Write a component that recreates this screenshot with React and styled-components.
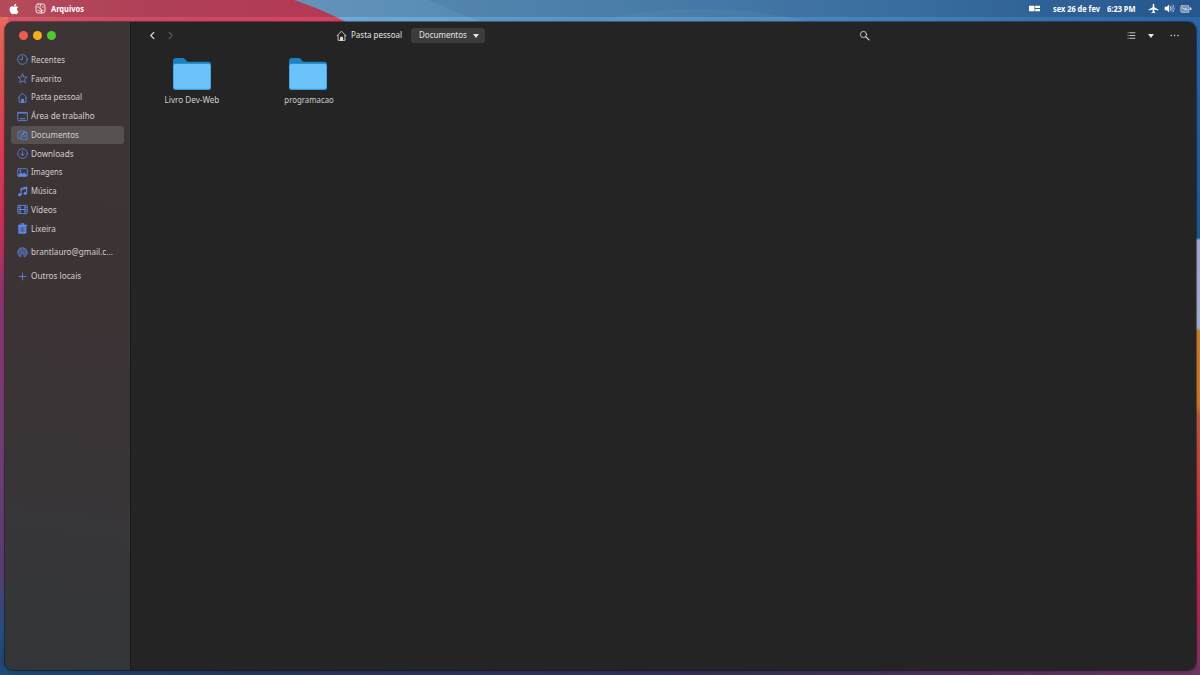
import React from "react";
import styled, { createGlobalStyle, css } from "styled-components";
import { FaApple } from "react-icons/fa";

const GlobalStyle = createGlobalStyle`
  * {
    box-sizing: border-box;
  }

  body {
    margin: 0;
    overflow: hidden;
    font-family: "Noto Sans", "Open Sans", sans-serif;
    font-size: 9.2px;
    line-height: 12px;
  }
`;

const Desktop = styled.div`
  position: relative;
  width: 1200px;
  height: 675px;
  overflow: hidden;
  display: flex;
  flex-direction: column;
`;

const WallpaperSvg = styled.svg`
  position: absolute;
  top: 0;
  left: 0;
  width: 1200px;
  height: 675px;
`;

const MenuBar = styled.header`
  position: relative;
  display: flex;
  align-items: center;
  height: 17px;
  padding: 0 8px;
  background: rgba(0, 0, 0, 0.15);
  color: #fff;
  flex-shrink: 0;
`;

const MenuLeft = styled.div`
  display: flex;
  align-items: center;
`;

const MenuRight = styled.div`
  display: flex;
  align-items: center;
  margin-left: auto;
`;

const Icon = styled.svg`
  display: block;
  flex-shrink: 0;
  width: ${(props) => props.$size || 11}px;
  height: ${(props) => props.$size || 11}px;
  margin-left: ${(props) => props.$left || 0}px;
  fill: none;
  stroke: currentColor;
  stroke-width: ${(props) => props.$stroke || 1.2};
  stroke-linecap: round;
  stroke-linejoin: round;
`;

/* condensed text, $width is the width it takes in the row */
const Label = styled.span`
  display: block;
  white-space: nowrap;
  width: ${(props) => (props.$width ? `${props.$width}px` : "auto")};
  margin-left: ${(props) => props.$left || 0}px;
  transform: scaleX(${(props) => props.$scale || 0.87});
  transform-origin: ${(props) => props.$origin || "left"};
  ${(props) =>
    props.$bold &&
    css`
      font-size: 8.6px;
      font-weight: 700;
    `}
`;

const Window = styled.main`
  position: relative;
  display: flex;
  width: 1191px;
  height: 648px;
  margin: 5px 0 0 5px;
  border-radius: 8px;
  overflow: hidden;
  background: #242424;
`;

const WindowShadow = styled.div`
  position: absolute;
  top: 22px;
  left: 5px;
  width: 1191px;
  height: 648px;
  border-radius: 8px;
  box-shadow: 0 0 0 1px rgba(0, 0, 0, 0.35), 0 1px 4px rgba(0, 0, 0, 0.3);
`;

const Sidebar = styled.nav`
  width: 126px;
  padding: 9px 6px 0;
  border-right: 1px solid #1a1a1a;
  background: linear-gradient(188deg, #3d3435 0%, #3c3335 45%, #393436 65%, #363638 80%, #333538 100%);
  color: #d2cfcf;
  flex-shrink: 0;
`;

const Lights = styled.div`
  display: flex;
  gap: 4.8px;
  height: 20px;
  padding: 0 0 0 8px;
`;

const Light = styled.i`
  width: 9px;
  height: 9px;
  border-radius: 50%;
  background: ${(props) => props.$color};
`;

const Place = styled.div`
  display: flex;
  align-items: center;
  height: 17.75px;
  margin-top: ${(props) => props.$top || 0}px;
  margin-bottom: 1px;
  padding-left: 6px;
  border-radius: 3px;
  background: ${(props) => (props.$active ? "#565051" : "transparent")};

  svg {
    margin-right: 3px;
    color: #5f8be2;
  }
`;

const Content = styled.section`
  flex: 1;
`;

const HeaderBar = styled.div`
  display: flex;
  align-items: center;
  height: 27px;
  padding-left: 15.5px;
  color: #e6e6e6;
`;

const Crumb = styled.div`
  display: flex;
  align-items: center;
  width: 67px;
  margin-left: 159.5px;

  span {
    margin-top: -1px;
  }
`;

const ActiveCrumb = styled.div`
  display: flex;
  align-items: center;
  width: 74px;
  height: 15px;
  margin-left: 8px;
  padding-left: 8px;
  border-radius: 3px;
  background: #3c3c3c;

  span {
    margin-top: -1px;
  }
`;

const Caret = styled.i`
  border: 3.5px solid transparent;
  border-top: 4px solid currentColor;
  border-bottom: 0;
  margin-left: ${(props) => props.$left || 0}px;
`;

const Files = styled.div`
  display: flex;
  padding: 8px 0 0 3px;
`;

const Folder = styled.figure`
  display: flex;
  flex-direction: column;
  align-items: center;
  width: 116.2px;
  margin: 0;
  color: #d0d0d0;

  svg {
    display: block;
    width: 40px;
    height: 34px;
  }

  figcaption {
    margin-top: 3px;
  }
`;

const Wallpaper = () => (
  <WallpaperSvg viewBox="0 0 1200 675">
    <defs>
      <linearGradient id="top" x1="290" x2="1200" y1="0" y2="0" gradientUnits="userSpaceOnUse">
        <stop offset="0" stopColor="#74aedb" />
        <stop offset="0.35" stopColor="#5f9dcf" />
        <stop offset="0.7" stopColor="#4684c0" />
        <stop offset="1" stopColor="#2d67a9" />
      </linearGradient>
      <linearGradient id="red" x1="0" x2="350" y1="0" y2="0" gradientUnits="userSpaceOnUse">
        <stop offset="0" stopColor="#d5596a" />
        <stop offset="0.4" stopColor="#cd4c67" />
        <stop offset="1" stopColor="#d54363" />
      </linearGradient>
      <linearGradient id="left" x1="0" x2="0" y1="17" y2="675" gradientUnits="userSpaceOnUse">
        <stop offset="0" stopColor="#e96a5f" />
        <stop offset="0.1" stopColor="#e05254" />
        <stop offset="0.2" stopColor="#df3c57" />
        <stop offset="0.32" stopColor="#c93158" />
        <stop offset="0.42" stopColor="#8d356f" />
        <stop offset="0.65" stopColor="#704173" />
        <stop offset="0.84" stopColor="#5a3d73" />
        <stop offset="0.93" stopColor="#295084" />
        <stop offset="1" stopColor="#1e426d" />
      </linearGradient>
      <linearGradient id="right" x1="0" x2="0" y1="0" y2="675" gradientUnits="userSpaceOnUse">
        <stop offset="0" stopColor="#2d68ab" />
        <stop offset="0.34" stopColor="#23598f" />
        <stop offset="0.352" stopColor="#22578c" />
        <stop offset="0.356" stopColor="#a2abd0" />
        <stop offset="0.486" stopColor="#a7b2d3" />
        <stop offset="0.49" stopColor="#c98233" />
        <stop offset="0.6" stopColor="#c87c35" />
        <stop offset="0.615" stopColor="#b85c40" />
        <stop offset="0.7" stopColor="#c04741" />
        <stop offset="0.8" stopColor="#bc3048" />
        <stop offset="0.9" stopColor="#a82a52" />
        <stop offset="1" stopColor="#713765" />
      </linearGradient>
      <linearGradient id="bottom" x1="0" x2="1200" y1="0" y2="0" gradientUnits="userSpaceOnUse">
        <stop offset="0" stopColor="#204b78" />
        <stop offset="0.2" stopColor="#27385f" />
        <stop offset="0.6" stopColor="#353158" />
        <stop offset="1" stopColor="#6c365f" />
      </linearGradient>
    </defs>
    <rect width="1200" height="675" fill="url(#top)" />
    <path d="M428 0C450 9 465 17 490 24H1200V0z" fill="#285d97" opacity="0.12" />
    <path d="M590 24C640 10 675 8 710 9c45 1 75 6 105 15z" fill="#8dbbe0" opacity="0.13" />
    <path d="M0 0H294C315 7 333 15 350 24H0z" fill="url(#red)" />
    <rect y="17" width="8" height="658" fill="url(#left)" />
    <rect x="1192" y="17" width="8" height="658" fill="url(#right)" />
    <rect y="666" width="1200" height="9" fill="url(#bottom)" />
  </WallpaperSvg>
);

const ICONS = {
  clock: (
    <>
      <circle cx="8" cy="8" r="7" />
      <path d="M8 4v4H4.5" />
    </>
  ),
  star: <path d="M8 1.2l1.8 4.6 5 .3-3.9 3.2 1.3 4.9L8 11.5l-4.2 2.7 1.3-4.9L1.2 6.1l5-.3z" />,
  home: (
    <>
      <path d="M1.5 8.500L8 1.700l6.500 6.800M3 8v7h10V8" />
      <path d="M6.500 15v-4.500h3V15z" fill="currentColor" />
    </>
  ),
  desktop: (
    <>
      <rect x="1" y="2" width="14" height="12" rx="1" />
      <path d="M1 3h14" strokeWidth="1.600" />
      <path d="M4 11.300h8" strokeWidth="1.600" strokeLinecap="butt" />
    </>
  ),
  documents: (
    <>
      <path d="M5 13.500H1.500V4.500H4.500V3h2.200a1.400 1.400 0 0 1 2.600 0H11.500v1.500" />
      <path d="M9.500 5H14.500v10H6V8.500z" />
      <path d="M6 8.500h3.500V5M9 11h2.500V8.500" />
    </>
  ),
  download: (
    <>
      <circle cx="8" cy="8" r="7" />
      <path d="M8 4.500v6M5.500 8.500L8 11l2.500-2.500" />
    </>
  ),
  image: (
    <>
      <rect x="1" y="2.500" width="14" height="11" rx="1" />
      <path d="M2 12l3.500-4 2.500 2.500 2.500-2 3.500 3.500v1H2z" fill="currentColor" />
      <circle cx="4.500" cy="5.700" r=".8" fill="currentColor" />
    </>
  ),
  music: (
    <>
      <path d="M6 12V3.500l8-2V10" strokeWidth="1.500" />
      <path d="M6 5l8-2" strokeWidth="2" />
      <ellipse cx="4" cy="12.700" rx="2" ry="1.700" fill="currentColor" />
      <ellipse cx="12" cy="10.700" rx="2" ry="1.700" fill="currentColor" />
    </>
  ),
  video: (
    <>
      <rect x="1" y="2" width="14" height="12" rx="1" />
      <path d="M4.500 2v12M11.500 2v12M4 8h8" strokeWidth="1.400" />
      <path d="M2 5h2M2 8h2M2 11h2M12 5h2M12 8h2M12 11h2" strokeWidth="1" />
    </>
  ),
  trash: (
    <>
      <path d="M2 3.500h12M6 3V1.300h4V3" strokeWidth="1.600" />
      <path d="M3 4h10v11H3z" fill="currentColor" />
      <path d="M6 6.500v6M8 6.500v6M10 6.500v6" stroke="#3c3335" strokeWidth=".8" />
    </>
  ),
  account: (
    <>
      <circle cx="8" cy="8" r="7" fill="currentColor" fillOpacity=".6" strokeOpacity=".7" />
      <path d="M4 12.500a5.500 5.500 0 1 1 8 0M6 11.500a3.200 3.200 0 1 1 4 0" stroke="#3c3b54" strokeWidth=".6" />
      <path d="M8 9l-2.500 7h5z" fill="#3c3335" stroke="none" />
    </>
  ),
  plus: <path d="M8 3v10M3 8h10" />,
};

const places = [
  { icon: "clock", name: "Recentes" },
  { icon: "star", name: "Favorito" },
  { icon: "home", name: "Pasta pessoal" },
  { icon: "desktop", name: "Área de trabalho", scale: 0.885 },
  { icon: "documents", name: "Documentos", active: true },
  { icon: "download", name: "Downloads", scale: 0.885 },
  { icon: "image", name: "Imagens", scale: 0.83 },
  { icon: "music", name: "Música", scale: 0.84 },
  { icon: "video", name: "Vídeos", scale: 0.9 },
  { icon: "trash", name: "Lixeira", scale: 0.88 },
  { icon: "account", name: "brantlauro@gmail.c...", scale: 0.885, top: 6 },
  { icon: "plus", name: "Outros locais", scale: 0.89, top: 6 },
];

const FolderIcon = () => (
  <svg viewBox="0 0 40 34">
    <path d="M1 4a3 3 0 0 1 3-3h7c2 0 3 3.700 5 3.700h20.500A2.500 2.500 0 0 1 39 7.200V20H1z" fill="#1f80bd" />
    <rect x="1" y="6.500" width="38" height="26.500" rx="2.500" fill="#3c9bdb" />
    <rect x="1.700" y="7" width="36.600" height="24.800" rx="2" fill="#6bc3fa" />
  </svg>
);

const App = () => {
  return (
    <Desktop>
      <GlobalStyle />
      <Wallpaper />
      <WindowShadow />

      <MenuBar>
        <MenuLeft>
          <FaApple size={12} />
          <Icon viewBox="0 0 16 16" $size={11} $left={15}>
            <rect x="1.500" y="1.500" width="13" height="13" rx="3" />
            <path d="M9 1.500C7.500 4 7 6 7 8.500h2c0 2 .2 4 .8 6M4.500 5v1.500M11.500 5v1.500M4 10.500c2 2 6 2 8 0" />
          </Icon>
          <Label $bold $left={5}>Arquivos</Label>
        </MenuLeft>
        <MenuRight>
          <Icon viewBox="0 0 16 16" $size={11}>
            <path d="M0 4h8v8H0zM9 4h7v3.300H9zM9 8.700h7V12H9z" fill="currentColor" stroke="none" />
          </Icon>
          <Label $bold $left={13} $width={47} $scale={0.86}>sex 26 de fev</Label>
          <Label $bold $left={7} $width={28}>6:23 PM</Label>
          <Icon viewBox="0 0 16 16" $size={11} $left={13}>
            <path
              d="M8 1c-.8 0-1.200 1-1.200 2v3L1 9.500V11l5.800-1.500v3L5 14v1l3-.7 3 .7v-1l-1.800-1.500v-3L15 11V9.500L9.200 6V3C9.200 2 8.800 1 8 1z"
              fill="currentColor"
              stroke="none"
            />
          </Icon>
          <Icon viewBox="0 0 16 16" $size={11} $left={5}>
            <path d="M1 5.500h3l3.500-3.200v11.400L4 10.500H1z" fill="currentColor" stroke="none" />
            <path d="M9.500 5.500q1.500 2.500 0 5" />
            <path d="M11.500 4q2.500 4 0 8M13.500 2.800q3 5.200 0 10.400" opacity=".6" />
          </Icon>
          <Icon viewBox="0 0 16 16" $size={12} $left={5} $stroke={0.9}>
            <path
              d="M2.500 3.500h9.300v9H2.500A1.500 1.500 0 0 1 1 11V5a1.500 1.500 0 0 1 1.500-1.500z"
              fill="currentColor"
              fillOpacity=".35"
              strokeOpacity=".7"
            />
            <path d="M13.500 6.500v3L15 8z" fill="currentColor" />
            <path d="M3.500 6.500l3.500 2.500V7l3 2.500" />
          </Icon>
        </MenuRight>
      </MenuBar>

      <Window>
        <Sidebar>
          <Lights>
            <Light $color="#ee5b50" />
            <Light $color="#f3ae1c" />
            <Light $color="#52c830" />
          </Lights>
          {places.map((place) => (
            <Place key={place.name} $active={place.active} $top={place.top}>
              <Icon viewBox="0 0 16 16">{ICONS[place.icon]}</Icon>
              <Label $scale={place.scale}>{place.name}</Label>
            </Place>
          ))}
        </Sidebar>

        <Content>
          <HeaderBar>
            <Icon viewBox="0 0 16 16" $stroke={1.6}>
              <path d="M10 3.500L5.500 8l4.500 4.500" />
            </Icon>
            <Icon viewBox="0 0 16 16" $left={7.5} $stroke={1.5} color="#666">
              <path d="M6 3.500L10.500 8 6 12.500" />
            </Icon>
            <Crumb>
              <Icon viewBox="0 0 16 16">{ICONS.home}</Icon>
              <Label $left={4}>Pasta pessoal</Label>
            </Crumb>
            <ActiveCrumb>
              <Label $width={48}>Documentos</Label>
              <Caret $left={6} />
            </ActiveCrumb>
            <Icon viewBox="0 0 16 16" $left={374.5}>
              <circle cx="6.500" cy="6.500" r="4.500" />
              <path d="M10 10l4.500 4.500" strokeWidth="1.600" />
            </Icon>
            <Icon viewBox="0 0 16 16" $left={256}>
              <path d="M5.500 4H13M5.500 8H13M5.500 12H13M3 4h.1M3 8h.1M3 12h.1" />
            </Icon>
            <Caret $left={11} />
            <Icon viewBox="0 0 16 16" $left={15} $stroke={2}>
              <path d="M3 8h.1M8 8h.1M13 8h.1" />
            </Icon>
          </HeaderBar>

          <Files>
            <Folder>
              <FolderIcon />
              <figcaption>
                <Label $origin="center" $scale={0.885}>Livro Dev-Web</Label>
              </figcaption>
            </Folder>
            <Folder>
              <FolderIcon />
              <figcaption>
                <Label $origin="center" $left={1.5} $scale={0.85}>programacao</Label>
              </figcaption>
            </Folder>
          </Files>
        </Content>
      </Window>
    </Desktop>
  );
};

export default App;
